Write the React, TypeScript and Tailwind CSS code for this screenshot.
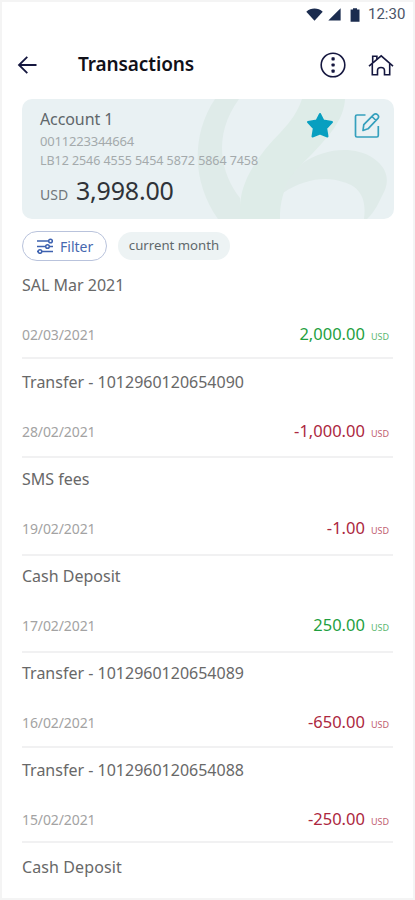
import React from "react";

type Transaction = {
  title: string;
  date: string;
  amount: string;
  box: string; // height of the row and the offset of its title
};

const transactions: Transaction[] = [
  { title: "SAL Mar 2021", date: "02/03/2021", amount: "2,000.00", box: "h-[90px] pt-[4px]" },
  { title: "Transfer - 1012960120654090", date: "28/02/2021", amount: "-1,000.00", box: "h-[99px] pt-[11px]" },
  { title: "SMS fees", date: "19/02/2021", amount: "-1.00", box: "h-[98px] pt-[9px]" },
  { title: "Cash Deposit", date: "17/02/2021", amount: "250.00", box: "h-[97px] pt-[8px]" },
  { title: "Transfer - 1012960120654089", date: "16/02/2021", amount: "-650.00", box: "h-[95px] pt-[8px]" },
  { title: "Transfer - 1012960120654088", date: "15/02/2021", amount: "-250.00", box: "h-[95px] pt-[10px]" },
];

const StatusBar: React.FC = () => (
  <div className="flex h-[25px] items-center justify-end pr-[7px] text-[#1b2c4f]">
    <svg width="17" height="13" viewBox="0 0 17 13" fill="currentColor">
      <path d="M8.500 12.800.300 3.800C2.500 1.500 5.500.500 8.500.500s6 1 8.200 3.300z" />
    </svg>
    <svg className="ml-[5px]" width="13" height="13" viewBox="0 0 13 13" fill="currentColor">
      <path d="M12.600.3v12.200H.3z" />
    </svg>
    <svg className="ml-[9px]" width="10" height="14" viewBox="0 0 10 14" fill="currentColor">
      <path d="M3 .3h4v1.200h2.500v12.200H.6V1.500H3z" />
    </svg>
    <span className="ml-[8px] w-[38px] whitespace-nowrap font-['Roboto',sans-serif] text-[15px] leading-none text-[#4b5468]">
      12:30
    </span>
  </div>
);

const Header: React.FC = () => (
  <header className="flex h-[72px] items-center pt-[3px] pr-[19px] pl-[15px] text-[#15173f]">
    <svg width="20" height="20" viewBox="0 0 20 20" fill="none" stroke="currentColor" strokeWidth="1.800">
      <path d="M10.300 1.800 2 10l8.300 8.200M2 10h17.500" />
    </svg>
    <h1 className="ml-[41px] flex-1 whitespace-nowrap text-[19px] font-semibold leading-none tracking-[-0.100px] text-[#111119]">
      Transactions
    </h1>
    <svg width="26" height="26" viewBox="0 0 26 26" fill="none" stroke="currentColor" strokeWidth="1.600">
      <circle cx="13" cy="13" r="11.800" />
      <g fill="currentColor" stroke="none">
        <rect x="11.500" y="5.300" width="3.200" height="3.200" rx="0.800" />
        <rect x="11.500" y="11.400" width="3.200" height="3.200" rx="0.800" />
        <rect x="11.500" y="17.500" width="3.200" height="3.200" rx="0.800" />
      </g>
    </svg>
    <svg className="ml-[22px]" width="26" height="22" viewBox="0 0 26 22" fill="none" stroke="currentColor" strokeWidth="1.600">
      <path d="M1 12.200 13.200 1.800 25 12.200" />
      <path d="M4.700 8.800V2.300h4.200v2.800M4.300 10v10.700h5.200v-4c0-4.300 7-4.300 7 0v4h5.200V10" />
    </svg>
  </header>
);

const AccountCard: React.FC = () => (
  <section className="relative h-[120px] w-[372px] overflow-hidden rounded-[10px] bg-[#e9f1f3] pl-[18px]">
    <svg className="absolute inset-0" width="372" height="120" viewBox="0 0 372 120">
      <path d="M193 0C169 36 170 83 196 120h24l-2-21C199 75 190 37 217 0z" fill="#dfebe9" />
      <path d="M280 0h43c-1 21-16 38-42 64-15 17-23 30-23 56h-40c0-16 0-23 5-36 6-16 19-34 35-50 12-13 18-22 22-34z" fill="#deece8" />
      <path d="M281 64c20-14 50-18 70-5 15 10 17 24 10 36-4 8-8 18-16 25h-3c3-21-5-33-21-37-17-6-39-3-60 11 3-10 8-19 20-30z" fill="#dfebe9" />
    </svg>
    <div className="relative flex justify-between pr-[14px]">
      <div className="whitespace-nowrap">
        <h2 className="pt-[9px] text-[16px] leading-[22px] tracking-[-0.100px] text-[#60666a]">Account 1</h2>
        <p className="pt-[2px] text-[13px] leading-[19px] tracking-[-0.200px] text-[#a4aaac]">0011223344664</p>
        <p className="text-[12.500px] leading-[19px] tracking-[-0.060px] text-[#a4aaac]">LB12 2546 4555 5454 5872 5864 7458</p>
        <p className="flex items-baseline pt-[4px] leading-[32px] text-[#2f3338]">
          <span className="w-[36px] text-[14px] text-[#70777b]">USD</span>
          <span className="text-[25px] tracking-[-0.200px]">3,998.00</span>
        </p>
      </div>
      <div className="flex items-start pt-[13px]">
        <svg width="28" height="27" viewBox="0 0 28 27" fill="#089fc0" stroke="#089fc0" strokeWidth="2" strokeLinejoin="round">
          <path d="m14 2 3.300 6.500 8.700 1.500-5.800 6.300 1.300 8.200-7.500-3-7.500 3 1.300-8.200L2 10l8.700-1.500z" />
        </svg>
        <svg className="ml-[20px]" width="26" height="27" viewBox="0 0 26 27" fill="none" stroke="#35a0bd" strokeWidth="1.700" strokeLinejoin="round">
          <path d="M11.500 3H3c-1 0-1.500.5-1.500 1.500v19c0 1 .5 1.500 1.500 1.500h19.800c1 0 1.500-.5 1.500-1.500v-9.500" />
          <path d="m9 18.500.8-5.800 9.900-10c2.600-2.400 6.500 1.200 4 4L14 16.800zM18 4.500l4 4" />
        </svg>
      </div>
    </div>
  </section>
);

const Filters: React.FC = () => (
  <div className="mt-[12px] flex h-[30px] items-center gap-[11px] whitespace-nowrap">
    <button className="flex h-[30px] w-[85px] items-center rounded-full border border-[#b9c3dc] pl-[14px] text-[14px] text-[#4668b0]">
      <svg className="mr-[6px]" width="17" height="16" viewBox="0 0 17 16" fill="#fff" stroke="#3d61af" strokeWidth="1.500">
        <path d="M0 3h16M0 8.500h16M0 13.500h16" />
        <circle cx="13.500" cy="3" r="1.800" />
        <circle cx="10.500" cy="8.500" r="1.800" />
        <circle cx="3" cy="13.500" r="1.800" />
      </svg>
      Filter
    </button>
    <span className="flex h-[28px] w-[112px] items-center justify-center rounded-full bg-[#edf3f4] text-[13.200px] text-[#60686b]">
      current month
    </span>
  </div>
);

const TransactionRow: React.FC<{ item: Transaction }> = ({ item }) => {
  const isDebit = item.amount.startsWith("-");

  return (
    <li className={`border-b-2 border-[#f1f1f2] whitespace-nowrap ${item.box}`}>
      <h3 className="text-[16px] leading-[24px] text-[#686868]">{item.title}</h3>
      <div className="mt-[25px] flex items-baseline justify-between pr-[4px] leading-[24px]">
        <span className="text-[14px] tracking-[-0.100px] text-[#a3a3a3]">{item.date}</span>
        <span className={isDebit ? "text-[#ac2740]" : "text-[#1f9f3f]"}>
          <span className="text-[16.500px]">{item.amount}</span>
          <span className="ml-[6px] text-[9px] opacity-75">USD</span>
        </span>
      </div>
    </li>
  );
};

const App: React.FC = () => {
  return (
    <div className="h-[900px] w-[415px] overflow-hidden border-2 border-[#f4f4f4] bg-white font-['Noto_Sans',sans-serif]">
      <StatusBar />
      <Header />
      <main className="px-[20px]">
        <AccountCard />
        <Filters />
        <ul className="mt-[8px]">
          {transactions.map((item) => (
            <TransactionRow key={item.title + item.date} item={item} />
          ))}
          <li className="pt-[12px] text-[16px] leading-[24px] tracking-[0.100px] text-[#686868]">Cash Deposit</li>
        </ul>
      </main>
    </div>
  );
};

export default App;
